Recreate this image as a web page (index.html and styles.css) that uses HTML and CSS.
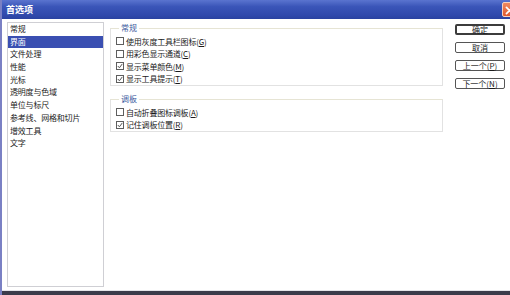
FILE: index.html
```html
<!DOCTYPE html>
<html lang="zh">
<head>
<meta charset="utf-8">
<title>首选项</title>
<link rel="stylesheet" href="styles.css">
</head>
<body>
<div class="window">
  <div class="titlebar">
    <span class="title">首选项</span>
    <span class="close"><svg width="15" height="15" viewBox="0 0 15 15"><path d="M4 4 L11 11 M11 4 L4 11" stroke="#fff" stroke-width="2" stroke-linecap="round"/></svg></span>
  </div>
  <div class="body">
    <ul class="nav">
      <li>常规</li>
      <li class="sel">界面</li>
      <li>文件处理</li>
      <li>性能</li>
      <li>光标</li>
      <li>透明度与色域</li>
      <li>单位与标尺</li>
      <li>参考线、网格和切片</li>
      <li>增效工具</li>
      <li>文字</li>
    </ul>
    <div class="main">
      <div class="groups">
        <fieldset class="group g1">
          <legend>常规</legend>
          <div class="row"><span class="cb"></span>使用灰度工具栏图标(<u>G</u>)</div>
          <div class="row"><span class="cb"></span>用彩色显示通道(<u>C</u>)</div>
          <div class="row"><span class="cb"><svg width="6" height="6" viewBox="0 0 6 6"><polyline points="0.8,3 2.4,4.8 5.3,0.9" fill="none" stroke="#555" stroke-width="1"/></svg></span>显示菜单颜色(<u>M</u>)</div>
          <div class="row"><span class="cb"><svg width="6" height="6" viewBox="0 0 6 6"><polyline points="0.8,3 2.4,4.8 5.3,0.9" fill="none" stroke="#555" stroke-width="1"/></svg></span>显示工具提示(<u>T</u>)</div>
        </fieldset>
        <fieldset class="group g2">
          <legend>调板</legend>
          <div class="row"><span class="cb"></span>自动折叠图标调板(<u>A</u>)</div>
          <div class="row"><span class="cb"><svg width="6" height="6" viewBox="0 0 6 6"><polyline points="0.8,3 2.4,4.8 5.3,0.9" fill="none" stroke="#555" stroke-width="1"/></svg></span>记住调板位置(<u>R</u>)</div>
        </fieldset>
      </div>
      <div class="buttons">
        <div class="btn default">确定</div>
        <div class="btn">取消</div>
        <div class="btn">上一个(<u>P</u>)</div>
        <div class="btn">下一个(<u>N</u>)</div>
      </div>
    </div>
  </div>
  <div class="footer"></div>
</div>
</body>
</html>
```

FILE: styles.css
```css
* { box-sizing: border-box; }
html, body { margin: 0; padding: 0; }
body {
  width: 510px;
  height: 295px;
  overflow: hidden;
  background: #ffffff;
  font-family: "Noto Sans CJK SC", "Noto Sans", sans-serif;
  font-size: 8px;
  color: #1a1a1a;
}
.window {
  width: 510px;
  height: 295px;
  display: flex;
  flex-direction: column;
  border-left: 2px solid #7a80c4;
}
.titlebar {
  height: 19px;
  flex: none;
  display: flex;
  align-items: center;
  justify-content: space-between;
  padding-left: 4px;
  overflow: hidden;
  background: linear-gradient(#5a74cf, #3a55b8 35%, #3049ac 80%, #2a42a0);
}
.title {
  color: #ffffff;
  font-family: "Noto Sans CJK SC", serif;
  font-weight: bold;
  font-size: 9px;
  line-height: 10px;
}
.close {
  width: 15px;
  height: 15px;
  margin-right: -7px;
  border-radius: 2px;
  border: 1px solid #f6d2c0;
  background: linear-gradient(#f08a60, #e05a30);
  display: flex;
}
.close svg { display: block; }
.body {
  flex: 1;
  display: flex;
  padding: 3px 0 3px 5px;
  border-bottom: 1px solid #e4e4e8;
}
.nav {
  list-style: none;
  margin: 0;
  padding: 0;
  width: 97px;
  border: 1px solid #cfcfd4;
  background: #ffffff;
}
.nav li {
  height: 12.7px;
  line-height: 12.7px;
  padding-left: 2px;
  white-space: nowrap;
  letter-spacing: -0.2px;
}
.nav li.sel {
  background: #3a4fb2;
  color: #ffffff;
}
.main {
  flex: 1;
  display: flex;
  padding-left: 6px;
}
.groups {
  width: 333px;
  display: flex;
  flex-direction: column;
}
.group {
  margin: 0;
  padding: 2px 5px 0 5px;
  border: 1px solid #e2e2e2;
  border-top-color: #e6e4d4;
  min-inline-size: 0;
}
.g1 { margin-top: 1px; }
.g2 { margin-top: 8px; }
.group legend {
  padding: 0 2px;
  margin-left: 3px;
  line-height: 10px;
  height: 10px;
  color: #3d5a9e;
}
.row {
  height: 12.5px;
  display: flex;
  align-items: center;
  white-space: nowrap;
  letter-spacing: -0.2px;
}
.row u, .btn u { text-decoration: underline; }
.cb {
  width: 8px;
  height: 8px;
  flex: none;
  border: 1px solid #5e5e5e;
  background: #ffffff;
  margin-right: 2px;
  display: flex;
  align-items: center;
  justify-content: center;
}
.cb svg { display: block; }
.buttons {
  width: 50px;
  margin-left: 12px;
  margin-top: 2px;
  display: flex;
  flex-direction: column;
  gap: 7px;
}
.btn {
  height: 11px;
  border: 1px solid #555555;
  border-radius: 2px;
  background: #ffffff;
  text-align: center;
  line-height: 9px;
  font-size: 8px;
  white-space: nowrap;
}
.btn.default {
  border: 2px solid #3c3c3c;
  line-height: 7px;
}
.footer {
  height: 4px;
  flex: none;
  background: #3b3b4a;
}
```
